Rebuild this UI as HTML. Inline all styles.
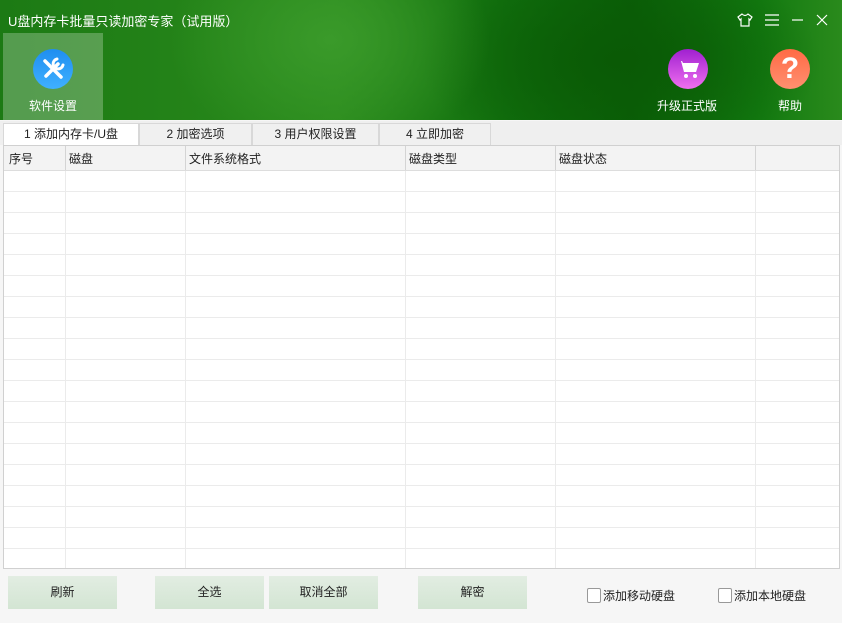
<!DOCTYPE html>
<html><head><meta charset="utf-8"><style>
*{margin:0;padding:0;box-sizing:border-box}
body{width:842px;height:623px;overflow:hidden;font-family:"Liberation Sans","Noto Sans CJK SC",sans-serif;font-size:12px;color:#222;background:#f6f6f6;position:relative}
.hd{position:absolute;left:0;top:0;width:842px;height:120px;background:radial-gradient(ellipse 160px 120px at 330px 40px,#3a9a2a,transparent),radial-gradient(ellipse 200px 110px at 620px 60px,#0a5a05,transparent),linear-gradient(90deg,#1c7a14 0%,#2a8a1c 40%,#11700e 60%,#0a5f08 75%,#127a10 90%,#2a8a1c 100%)}
.t{position:absolute;color:#fff;font-size:13px}
.sel{position:absolute;left:3px;top:33px;width:100px;height:87px;background:rgba(255,255,255,.25)}
.ic{position:absolute;width:40px;height:40px;border-radius:50%}
.tabs{position:absolute;left:0;top:121px;width:842px;height:24px;background:#efefef}
.tab{position:absolute;top:123px;height:22px;border:1px solid #d8d8d8;border-bottom:none;background:#f0f0f0;text-align:center;line-height:21px;font-size:12px}
.tbl{position:absolute;left:3px;top:145px;width:837px;height:424px;background:#fff;border:1px solid #d0d0d0}
.btn{position:absolute;top:576px;height:33px;width:109px;background:linear-gradient(#e2ede2,#d3e5d3);text-align:center;line-height:33px;font-size:12px}
.cb{position:absolute;top:588px;width:14px;height:15px;border:1px solid #999;background:#fff;border-radius:2px}
</style></head><body>
<div class="hd"></div>
<div class="t" style="left:8px;top:11px;font-size:13px">U盘内存卡批量只读加密专家（试用版）</div>
<svg style="position:absolute;left:737px;top:12px" width="92" height="16" viewBox="0 0 92 16" fill="none" stroke="#fff" stroke-width="1.2">
<path d="M5 2 L1 5 L3 8 L4 7 V14 H12 V7 L13 8 L15 5 L11 2 Q8 5 5 2Z"/>
<path d="M28 3H42M28 8H42M28 13H42"/>
<path d="M55 8H66"/>
<path d="M80 3L90 13M90 3L80 13"/>
</svg>
<div class="sel"></div>
<div class="ic" style="left:33px;top:49px;background:linear-gradient(#1f8ef0,#3fb0ff)"></div>
<svg style="position:absolute;left:33px;top:49px" width="40" height="40" viewBox="0 0 40 40" stroke="#fff" stroke-linecap="round" fill="none"><path d="M12 12L28 28" stroke-width="3.5"/><path d="M25 15L13 27" stroke-width="3.5"/><path d="M24 10A5 5 0 1 0 30 16" stroke-width="3"/></svg>
<div class="t" style="left:29px;top:97px;font-size:12px">软件设置</div>
<div class="ic" style="left:668px;top:49px;background:linear-gradient(#a020d0,#f070f0)"></div>
<svg style="position:absolute;left:668px;top:49px" width="40" height="40" viewBox="0 0 40 40" fill="#fff"><path d="M9 12h4l3 11h12l3-9H15l-1-2z"/><circle cx="18" cy="27" r="2"/><circle cx="27" cy="27" r="2"/></svg>
<div class="t" style="left:657px;top:97px;font-size:12px">升级正式版</div>
<div class="ic" style="left:770px;top:49px;background:linear-gradient(#ff6a45,#ff9070)"></div>
<div class="t" style="left:770px;top:49px;width:40px;text-align:center;font-size:30px;font-weight:bold;line-height:40px">?</div>
<div class="t" style="left:778px;top:97px;font-size:12px">帮助</div>
<div class="tabs"></div>
<div class="tab" style="left:3px;width:136px;background:#fff;height:23px">1 添加内存卡/U盘</div>
<div class="tab" style="left:139px;width:113px">2 加密选项</div>
<div class="tab" style="left:252px;width:127px">3 用户权限设置</div>
<div class="tab" style="left:379px;width:112px">4 立即加密</div>
<div class="tbl">
<svg width="835" height="422" style="position:absolute;left:0;top:0">
<rect x="0" y="0" width="835" height="24" fill="#f3f3f3"/>
<g stroke="#ebebeb">
<path d="M0 45.5H835M0 66.5H835M0 87.5H835M0 108.5H835M0 129.5H835M0 150.5H835M0 171.5H835M0 192.5H835M0 213.5H835M0 234.5H835M0 255.5H835M0 276.5H835M0 297.5H835M0 318.5H835M0 339.5H835M0 360.5H835M0 381.5H835M0 402.5H835"/>
<path d="M61.5 0V422M181.5 0V422M401.5 0V422M551.5 0V422M751.5 0V422"/>
</g>
<path d="M0 24.5H835" stroke="#ddd"/>
<path d="M61.5 0V24M181.5 0V24M401.5 0V24M551.5 0V24M751.5 0V24" stroke="#d4d4d4"/>
<g font-size="12" fill="#222" font-family="Liberation Sans,Noto Sans CJK SC,sans-serif">
<text x="5" y="17">序号</text><text x="65" y="17">磁盘</text><text x="185" y="17">文件系统格式</text><text x="405" y="17">磁盘类型</text><text x="555" y="17">磁盘状态</text></g>
</svg></div>
<div class="btn" style="left:8px">刷新</div>
<div class="btn" style="left:155px">全选</div>
<div class="btn" style="left:269px">取消全部</div>
<div class="btn" style="left:418px">解密</div>
<div class="cb" style="left:587px"></div><div style="position:absolute;left:603px;top:587px">添加移动硬盘</div>
<div class="cb" style="left:718px"></div><div style="position:absolute;left:734px;top:587px">添加本地硬盘</div>
</body></html>
